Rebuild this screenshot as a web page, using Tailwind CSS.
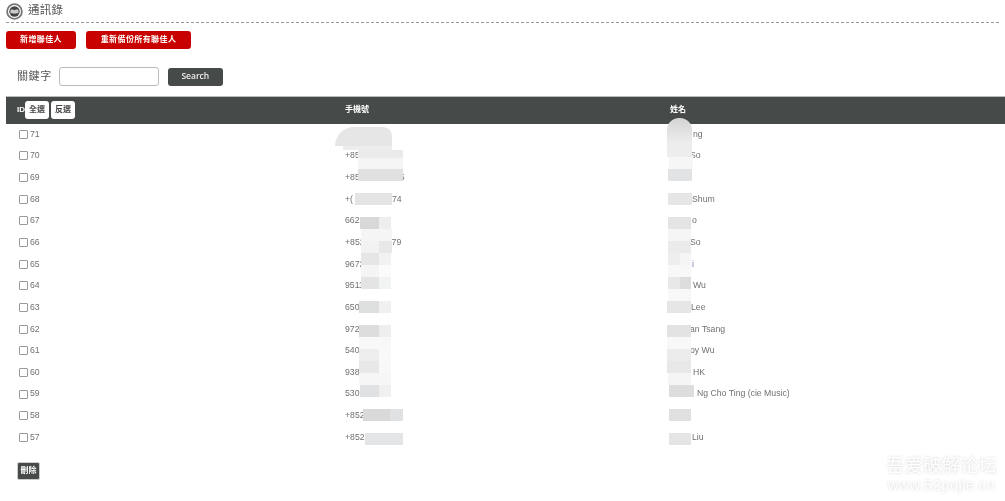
<!DOCTYPE html>
<html lang="zh-Hant">
<head>
  <meta charset="UTF-8" />
  <title>通訊錄</title>
  <script src="https://cdn.jsdelivr.net/npm/@tailwindcss/browser@4"></script>
</head>
<body class="bg-white font-['Liberation_Sans','Noto_Sans_CJK_TC',sans-serif] text-[#555] overflow-hidden">
  <div class="relative w-[1005px] h-[501px] overflow-hidden blur-[0.3px]">

    <header class="flex items-center gap-[5px] h-[23px] mx-[6px] border-b border-dashed border-[#999]">
      <svg class="w-[17px] h-[17px]" viewBox="0 0 17 17">
        <circle cx="8.500" cy="8.500" r="7.400" fill="#fff" stroke="#777" stroke-width="1.800" />
        <circle cx="8.500" cy="8.500" r="5.200" fill="#444" />
        <path d="M4.500 7c1.500-.8 3-.6 4 .2 1-.8 2.500-1 4-.2v3.500c-1.500-.6-3-.4-4 .3-1-.7-2.500-.9-4-.3z" fill="#ccc" />
      </svg>
      <h1 class="text-[11.500px] leading-none tracking-[0.2px] text-[#555]">通訊錄</h1>
    </header>

    <div class="flex gap-[10px] mt-[8px] ml-[6px]">
      <button class="w-[70px] h-[18px] rounded-[3px] bg-[#c80000] text-white text-[8px] font-bold leading-none tracking-[0.4px]">新增聯佳人</button>
      <button class="w-[105px] h-[18px] rounded-[3px] bg-[#c80000] text-white text-[8px] font-bold leading-none tracking-[0.4px]">重新備份所有聯佳人</button>
    </div>

    <form class="flex items-center mt-[18px] ml-[17px]">
      <label class="text-[11px] leading-none tracking-[0.6px] text-[#555]">關鍵字</label>
      <input type="text" class="w-[100px] h-[19px] ml-[7px] rounded-[3px] border border-[#bbb] bg-white" />
      <button type="button" class="w-[55px] h-[18px] ml-[9px] rounded-[3px] bg-[#464a48] text-[#eee] text-[8.500px] font-semibold font-['Open_Sans',sans-serif] leading-none">Search</button>
    </form>

    <table class="w-[999px] ml-[6px] mt-[10px] table-fixed border-collapse text-[8.700px] text-[#707070]">
      <thead>
        <tr class="h-[27px] bg-[#464a48] border-t border-[#bbb] text-white text-[8px] text-left">
          <th class="w-[328px] pl-[11px] p-0 font-bold">
            <div class="flex items-center">
              <span>ID</span>
              <span class="flex items-center justify-center w-[24px] h-[18px] rounded-[3px] bg-white text-[#444]">全選</span>
              <span class="flex items-center justify-center w-[24px] h-[18px] ml-[2px] rounded-[3px] bg-white text-[#444]">反選</span>
            </div>
          </th>
          <th class="w-[325px] p-0 pl-[11px] font-bold">手機號</th>
          <th class="p-0 pl-[11px] font-bold">姓名</th>
        </tr>
      </thead>
      <tbody>
        <tr class="h-[21.650px]"><td class="pl-[13px]"><label class="flex items-center gap-[2px]"><input type="checkbox" class="w-[9px] h-[9px] appearance-none border border-[#999] rounded-[1px]" />71</label></td><td class="pl-[11px]"></td><td class="pl-[34px]">ng</td></tr>
        <tr class="h-[21.650px]"><td class="pl-[13px]"><label class="flex items-center gap-[2px]"><input type="checkbox" class="w-[9px] h-[9px] appearance-none border border-[#999] rounded-[1px]" />70</label></td><td class="pl-[11px]">+85</td><td class="pl-[31px]">So</td></tr>
        <tr class="h-[21.650px]"><td class="pl-[13px]"><label class="flex items-center gap-[2px]"><input type="checkbox" class="w-[9px] h-[9px] appearance-none border border-[#999] rounded-[1px]" />69</label></td><td class="pl-[11px]">+85<span class="pl-[40px]">5</span></td><td></td></tr>
        <tr class="h-[21.650px]"><td class="pl-[13px]"><label class="flex items-center gap-[2px]"><input type="checkbox" class="w-[9px] h-[9px] appearance-none border border-[#999] rounded-[1px]" />68</label></td><td class="pl-[11px]">+(<span class="pl-[39px]">74</span></td><td class="pl-[33px]">Shum</td></tr>
        <tr class="h-[21.650px]"><td class="pl-[13px]"><label class="flex items-center gap-[2px]"><input type="checkbox" class="w-[9px] h-[9px] appearance-none border border-[#999] rounded-[1px]" />67</label></td><td class="pl-[11px]">662</td><td class="pl-[33px]">o</td></tr>
        <tr class="h-[21.650px]"><td class="pl-[13px]"><label class="flex items-center gap-[2px]"><input type="checkbox" class="w-[9px] h-[9px] appearance-none border border-[#999] rounded-[1px]" />66</label></td><td class="pl-[11px]">+852<span class="pl-[27px]">79</span></td><td class="pl-[31px]">So</td></tr>
        <tr class="h-[21.650px]"><td class="pl-[13px]"><label class="flex items-center gap-[2px]"><input type="checkbox" class="w-[9px] h-[9px] appearance-none border border-[#999] rounded-[1px]" />65</label></td><td class="pl-[11px]">9672</td><td class="pl-[33px] text-[#6a7fa8]">i</td></tr>
        <tr class="h-[21.650px]"><td class="pl-[13px]"><label class="flex items-center gap-[2px]"><input type="checkbox" class="w-[9px] h-[9px] appearance-none border border-[#999] rounded-[1px]" />64</label></td><td class="pl-[11px]">9511</td><td class="pl-[34px]">Wu</td></tr>
        <tr class="h-[21.650px]"><td class="pl-[13px]"><label class="flex items-center gap-[2px]"><input type="checkbox" class="w-[9px] h-[9px] appearance-none border border-[#999] rounded-[1px]" />63</label></td><td class="pl-[11px]">650</td><td class="pl-[32px]">Lee</td></tr>
        <tr class="h-[21.650px]"><td class="pl-[13px]"><label class="flex items-center gap-[2px]"><input type="checkbox" class="w-[9px] h-[9px] appearance-none border border-[#999] rounded-[1px]" />62</label></td><td class="pl-[11px]">972</td><td class="pl-[31px]">an Tsang</td></tr>
        <tr class="h-[21.650px]"><td class="pl-[13px]"><label class="flex items-center gap-[2px]"><input type="checkbox" class="w-[9px] h-[9px] appearance-none border border-[#999] rounded-[1px]" />61</label></td><td class="pl-[11px]">540</td><td class="pl-[31px]">oy Wu</td></tr>
        <tr class="h-[21.650px]"><td class="pl-[13px]"><label class="flex items-center gap-[2px]"><input type="checkbox" class="w-[9px] h-[9px] appearance-none border border-[#999] rounded-[1px]" />60</label></td><td class="pl-[11px]">938</td><td class="pl-[34px]">HK</td></tr>
        <tr class="h-[21.650px]"><td class="pl-[13px]"><label class="flex items-center gap-[2px]"><input type="checkbox" class="w-[9px] h-[9px] appearance-none border border-[#999] rounded-[1px]" />59</label></td><td class="pl-[11px]">530</td><td class="pl-[38px]">Ng Cho Ting (cie Music)</td></tr>
        <tr class="h-[21.650px]"><td class="pl-[13px]"><label class="flex items-center gap-[2px]"><input type="checkbox" class="w-[9px] h-[9px] appearance-none border border-[#999] rounded-[1px]" />58</label></td><td class="pl-[11px]">+852</td><td></td></tr>
        <tr class="h-[21.650px]"><td class="pl-[13px]"><label class="flex items-center gap-[2px]"><input type="checkbox" class="w-[9px] h-[9px] appearance-none border border-[#999] rounded-[1px]" />57</label></td><td class="pl-[11px]">+852</td><td class="pl-[33px]">Liu</td></tr>
      </tbody>
    </table>

    <button class="block w-[23px] h-[18px] ml-[17px] mt-[14px] rounded-[2px] bg-[#464a48] border border-[#ccc] text-white text-[8px] font-bold leading-none">刪除</button>

    <!-- mosaic over the phone numbers and names -->
    <div class="absolute left-[335px] top-[127px] w-[57px] h-[19px] rounded-tl-[30px] rounded-tr-[14px] bg-[#e6e6e6]"></div>
    <div class="absolute left-[343px] top-[146px] w-[49px] h-[4px] bg-[#ededed]"></div>
    <div class="absolute left-[358px] top-[150px] w-[45px] h-[8px] bg-[#ebebeb]"></div>
    <div class="absolute left-[358px] top-[158px] w-[45px] h-[11px] bg-[#f5f5f5]"></div>
    <div class="absolute left-[358px] top-[169px] w-[45px] h-[12px] bg-[#e0e0e0]"></div>
    <div class="absolute left-[355px] top-[193px] w-[37px] h-[12px] bg-[#e4e4e4]"></div>
    <div class="absolute left-[360px] top-[217px] w-[19px] h-[12px] bg-[#d8d8d8]"></div>
    <div class="absolute left-[379px] top-[217px] w-[12px] h-[12px] bg-[#eeeeee]"></div>
    <div class="absolute left-[361px] top-[229px] w-[31px] h-[12px] bg-[#f5f5f5]"></div>
    <div class="absolute left-[361px] top-[241px] w-[18px] h-[12px] bg-[#f2f2f2]"></div>
    <div class="absolute left-[379px] top-[241px] w-[13px] h-[12px] bg-[#e8e8e8]"></div>
    <div class="absolute left-[361px] top-[253px] w-[18px] h-[12px] bg-[#e6e6e6]"></div>
    <div class="absolute left-[379px] top-[253px] w-[12px] h-[12px] bg-[#f2f2f2]"></div>
    <div class="absolute left-[361px] top-[265px] w-[18px] h-[12px] bg-[#f5f5f5]"></div>
    <div class="absolute left-[379px] top-[265px] w-[12px] h-[12px] bg-[#fbfbfb]"></div>
    <div class="absolute left-[361px] top-[277px] w-[18px] h-[12px] bg-[#e4e4e4]"></div>
    <div class="absolute left-[379px] top-[277px] w-[12px] h-[12px] bg-[#f2f4f3]"></div>
    <div class="absolute left-[359px] top-[301px] w-[20px] h-[12px] bg-[#dddfdf]"></div>
    <div class="absolute left-[379px] top-[301px] w-[12px] h-[12px] bg-[#f0f0f0]"></div>
    <div class="absolute left-[359px] top-[325px] w-[20px] h-[12px] bg-[#dcdddc]"></div>
    <div class="absolute left-[379px] top-[325px] w-[12px] h-[12px] bg-[#eeeeee]"></div>
    <div class="absolute left-[359px] top-[337px] w-[32px] h-[12px] bg-[#f8f8f8]"></div>
    <div class="absolute left-[359px] top-[349px] w-[20px] h-[12px] bg-[#eeeeee]"></div>
    <div class="absolute left-[379px] top-[349px] w-[12px] h-[12px] bg-[#f9f9f9]"></div>
    <div class="absolute left-[359px] top-[361px] w-[20px] h-[12px] bg-[#e8e8e8]"></div>
    <div class="absolute left-[379px] top-[361px] w-[12px] h-[12px] bg-[#f8f8f8]"></div>
    <div class="absolute left-[359px] top-[373px] w-[32px] h-[12px] bg-[#f6f6f6]"></div>
    <div class="absolute left-[360px] top-[385px] w-[19px] h-[12px] bg-[#e0e1e2]"></div>
    <div class="absolute left-[379px] top-[385px] w-[12px] h-[12px] bg-[#f0f0f0]"></div>
    <div class="absolute left-[363px] top-[409px] w-[27px] h-[12px] bg-[#d9d9d9]"></div>
    <div class="absolute left-[390px] top-[409px] w-[13px] h-[12px] bg-[#e0e1e2]"></div>
    <div class="absolute left-[365px] top-[433px] w-[38px] h-[12px] bg-[#e4e5e6]"></div>

    <div class="absolute left-[667px] top-[118px] w-[25px] h-[27px] rounded-t-[12px] bg-gradient-to-b from-[#d4d4d4] to-[#efefef]"></div>
    <div class="absolute left-[667px] top-[145px] w-[25px] h-[12px] bg-[#ededed]"></div>
    <div class="absolute left-[669px] top-[157px] w-[24px] h-[12px] bg-[#f6f6f6]"></div>
    <div class="absolute left-[668px] top-[169px] w-[24px] h-[12px] bg-[#e2e3e4]"></div>
    <div class="absolute left-[668px] top-[193px] w-[24px] h-[12px] bg-[#e6e6e6]"></div>
    <div class="absolute left-[668px] top-[217px] w-[23px] h-[12px] bg-[#e4e4e4]"></div>
    <div class="absolute left-[668px] top-[229px] w-[23px] h-[12px] bg-[#f5f5f5]"></div>
    <div class="absolute left-[668px] top-[241px] w-[23px] h-[12px] bg-[#ebebeb]"></div>
    <div class="absolute left-[668px] top-[253px] w-[12px] h-[12px] bg-[#eeeeee]"></div>
    <div class="absolute left-[680px] top-[253px] w-[11px] h-[12px] bg-[#f5f5f5]"></div>
    <div class="absolute left-[668px] top-[265px] w-[23px] h-[12px] bg-[#f8f8f8]"></div>
    <div class="absolute left-[668px] top-[277px] w-[12px] h-[12px] bg-[#e8e8e8]"></div>
    <div class="absolute left-[680px] top-[277px] w-[11px] h-[12px] bg-[#dddddd]"></div>
    <div class="absolute left-[668px] top-[289px] w-[23px] h-[12px] bg-[#f8f8f8]"></div>
    <div class="absolute left-[667px] top-[301px] w-[24px] h-[12px] bg-[#e6e6e6]"></div>
    <div class="absolute left-[667px] top-[325px] w-[24px] h-[12px] bg-[#e3e3e3]"></div>
    <div class="absolute left-[667px] top-[337px] w-[24px] h-[12px] bg-[#f8f8f8]"></div>
    <div class="absolute left-[667px] top-[349px] w-[24px] h-[12px] bg-[#ececec]"></div>
    <div class="absolute left-[667px] top-[361px] w-[24px] h-[12px] bg-[#e8e8e8]"></div>
    <div class="absolute left-[668px] top-[373px] w-[23px] h-[12px] bg-[#f5f5f5]"></div>
    <div class="absolute left-[669px] top-[385px] w-[25px] h-[12px] bg-[#dddddd]"></div>
    <div class="absolute left-[669px] top-[409px] w-[22px] h-[12px] bg-[#e0e0e0]"></div>
    <div class="absolute left-[669px] top-[433px] w-[22px] h-[12px] bg-[#e5e5e5]"></div>

    <div class="absolute left-[884px] top-[454px] w-[115px] text-center text-white [text-shadow:0_0_3px_#d0d0d0]">
      <div class="text-[18.500px] leading-[21px] font-['Noto_Sans_CJK_SC',sans-serif]">吾爱破解论坛</div>
      <div class="mt-[3px] text-[14.500px] leading-[15px] tracking-[0.5px]">www.52pojie.cn</div>
    </div>
  </div>
</body>
</html>
